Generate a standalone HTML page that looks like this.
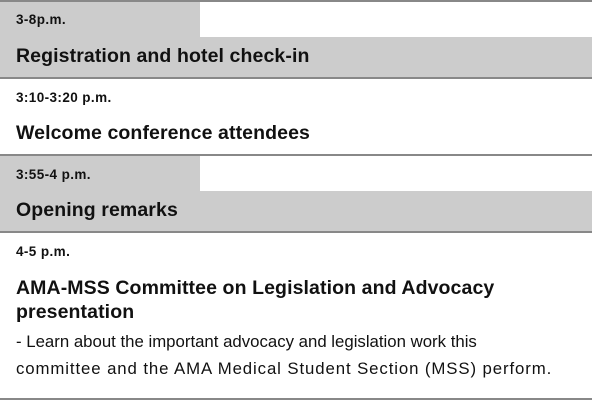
<!DOCTYPE html>
<html><head><style>
body{margin:0;width:592px;height:400px;position:relative;background:#fff;font-family:"Liberation Sans",sans-serif;color:#111;overflow:hidden}
.a{position:absolute;white-space:nowrap}
.g{background:#cccccc}
.l{background:#888;height:2px;left:0;width:592px}
.t{font-weight:bold;font-size:13.5px;left:16px;letter-spacing:0.4px}
.h{font-weight:bold;font-size:19.5px;left:16px;letter-spacing:0.1px}
.b{font-size:16.8px;left:16px;letter-spacing:0px}
</style></head><body>
<div class="a l" style="top:0"></div>
<div class="a g" style="top:2px;left:0;width:200px;height:35px"></div>
<div class="a g" style="top:37px;left:0;width:592px;height:40px"></div>
<div class="a l" style="top:77px"></div>
<div class="a l" style="top:154px"></div>
<div class="a g" style="top:156px;left:0;width:200px;height:35px"></div>
<div class="a g" style="top:191px;left:0;width:592px;height:40px"></div>
<div class="a l" style="top:231px"></div>
<div class="a l" style="top:398px"></div>

<div class="a t" style="top:12px">3-8p.m.</div>
<div class="a h" style="top:45px">Registration and hotel check-in</div>
<div class="a t" style="top:90px">3:10-3:20 p.m.</div>
<div class="a h" style="top:122px">Welcome conference attendees</div>
<div class="a t" style="top:167px">3:55-4 p.m.</div>
<div class="a h" style="top:199px">Opening remarks</div>
<div class="a t" style="top:244px">4-5 p.m.</div>
<div class="a h" style="top:276px;line-height:24px">AMA-MSS Committee on Legislation and Advocacy<br>presentation</div>
<div class="a b" style="top:328px;line-height:27px">- Learn about the important advocacy and legislation work this<br><span style="letter-spacing:0.9px">committee and the AMA Medical Student Section (MSS) perform.</span></div>
</body></html>
